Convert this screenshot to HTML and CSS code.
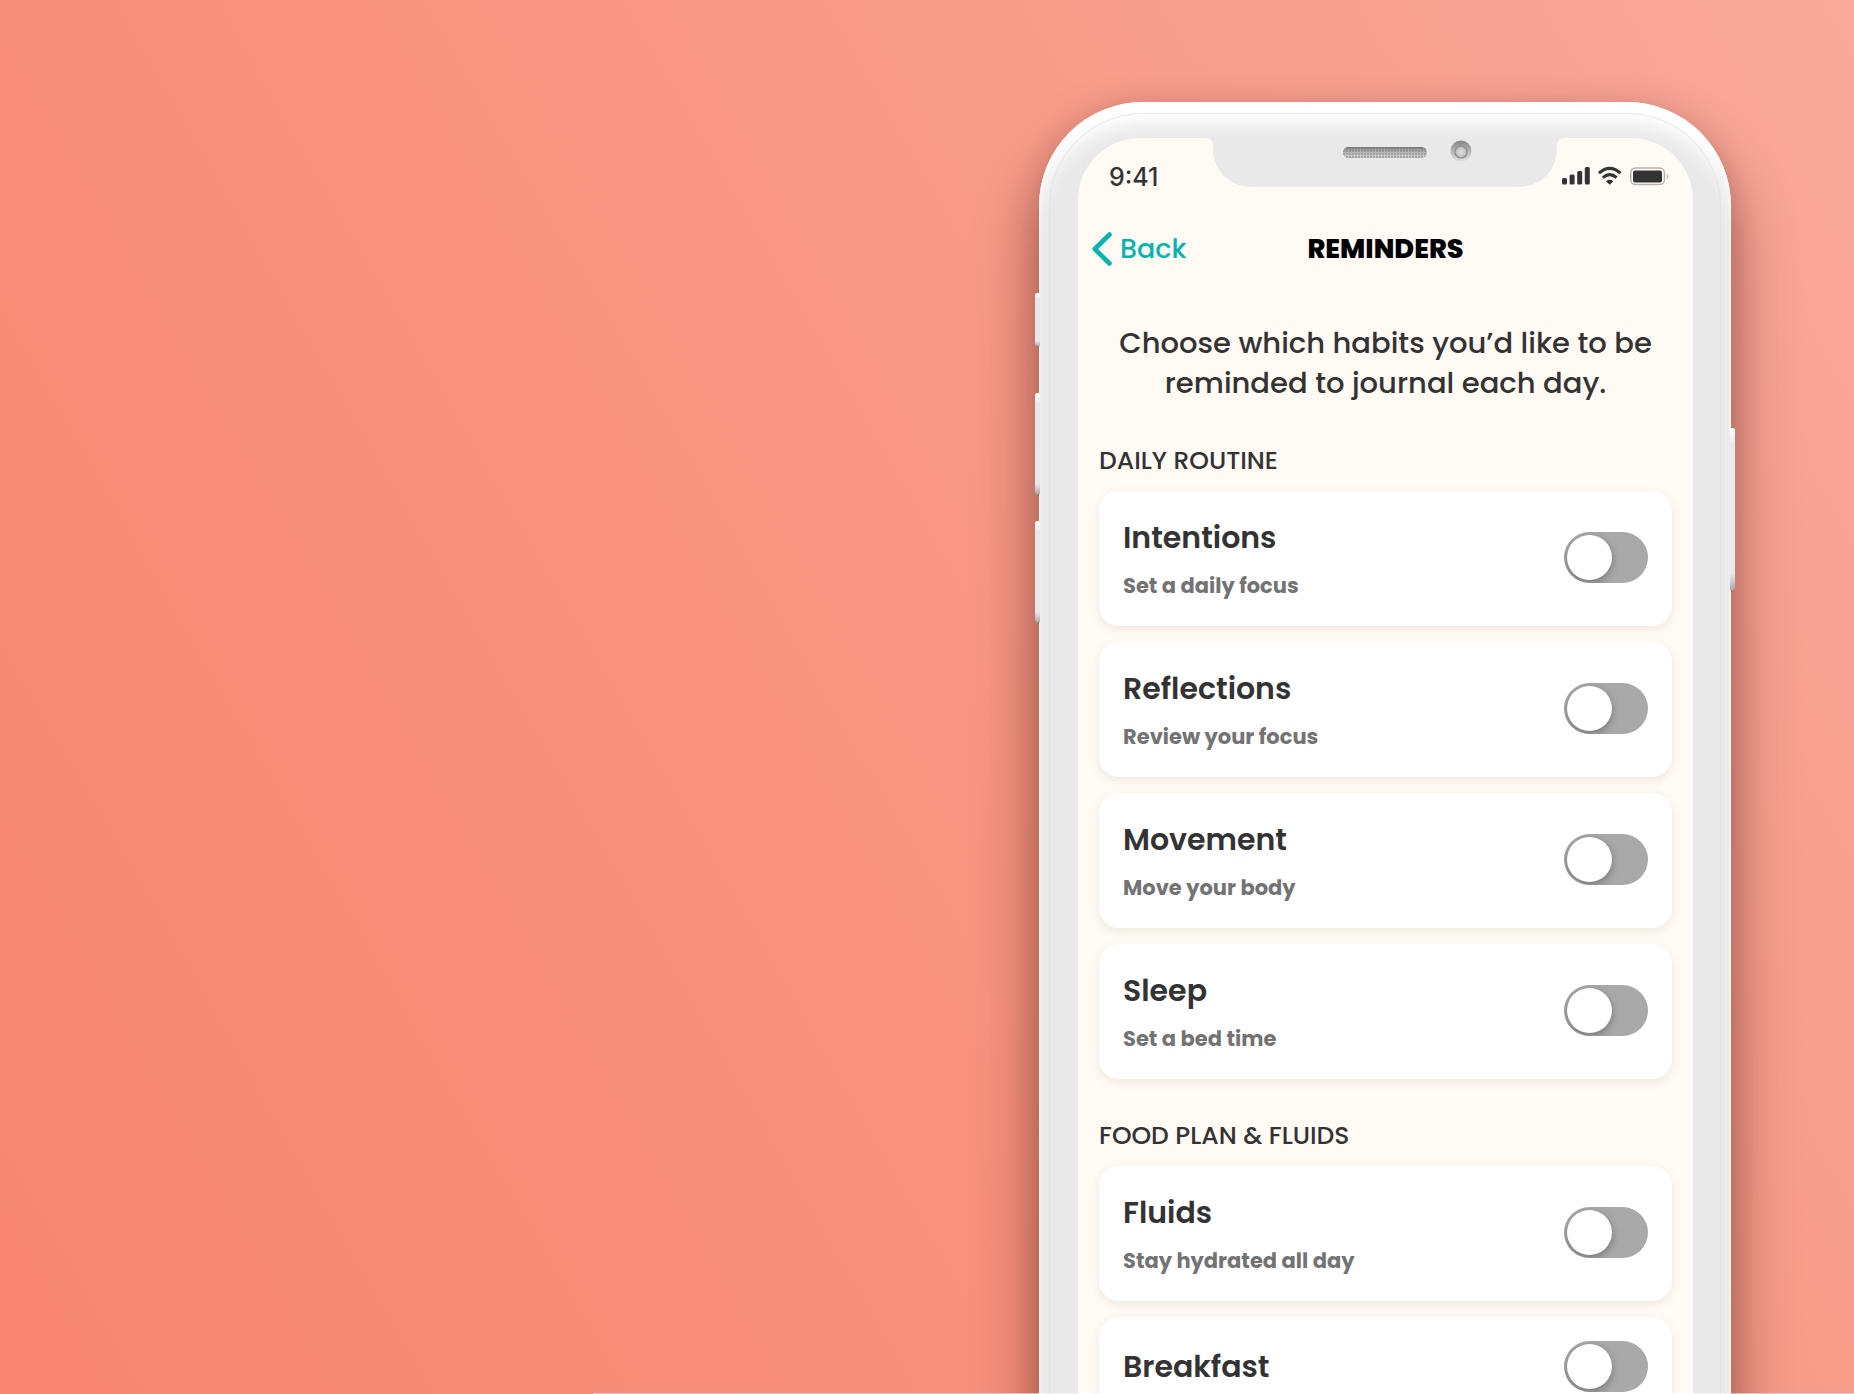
FILE: index.html
```
<!DOCTYPE html>
<html lang="en">
<head>
    <meta charset="UTF-8">
    <meta name="viewport" content="width=device-width, initial-scale=1.0">
    <title>Reminders</title>
    <link rel="stylesheet" href="styles.css">
</head>
<body>

    <main class="stage">
        <div class="phone">
            <!-- Side buttons -->
            <span class="side-button mute"></span>
            <span class="side-button volume-up"></span>
            <span class="side-button volume-down"></span>
            <span class="side-button power"></span>

            <div class="screen">
                <!-- Notch with speaker and camera -->
                <svg class="notch" viewBox="0 0 360 50" aria-hidden="true">
                    <defs>
                        <pattern id="mesh" width="3" height="3" patternUnits="userSpaceOnUse">
                            <rect width="3" height="3" fill="#c6c6c6"/>
                            <circle cx="1" cy="1" r="0.9" fill="#858585"/>
                        </pattern>
                        <linearGradient id="speaker-shade" x1="0" y1="0" x2="0" y2="1">
                            <stop offset="0" stop-color="#666" stop-opacity="0.8"/>
                            <stop offset="1" stop-color="#ddd" stop-opacity="0.1"/>
                        </linearGradient>
                        <linearGradient id="camera-ring" x1="0" y1="0" x2="0" y2="1">
                            <stop offset="0" stop-color="#858585"/>
                            <stop offset="1" stop-color="#e2e2e2"/>
                        </linearGradient>
                        <radialGradient id="lens">
                            <stop offset="0" stop-color="#e2e2e2"/>
                            <stop offset="1" stop-color="#b8b8b8"/>
                        </radialGradient>
                    </defs>
                    <path d="M0 0 C7 0 8 4 8 9 C8 34 25 49 48 49 H312 C335 49 352 34 352 9 C352 4 353 0 360 0 Z" fill="#e9e9e9"/>
                    <rect x="138" y="9" width="84" height="11" rx="5.5" fill="url(#mesh)"/>
                    <rect x="138" y="9" width="84" height="11" rx="5.5" fill="url(#speaker-shade)"/>
                    <circle cx="256" cy="13" r="10.5" fill="url(#camera-ring)"/>
                    <circle cx="256" cy="14" r="6" fill="url(#lens)" stroke="#8c8c8c" stroke-width="1.2"/>
                </svg>

                <div class="status-bar">
                    <time class="clock">9:41</time>
                    <svg class="status-icons" viewBox="0 0 108 20" aria-hidden="true">
                        <g fill="#333">
                            <rect x="0" y="11" width="5" height="6.5" rx="1.5"/>
                            <rect x="7.6" y="7.6" width="5" height="9.9" rx="1.5"/>
                            <rect x="15.2" y="4" width="5" height="13.5" rx="1.5"/>
                            <rect x="22.8" y="0" width="5" height="17.5" rx="1.5"/>
                            <rect x="71" y="3.5" width="29" height="12" rx="2"/>
                            <path d="M47.7 17.8 L44 14.2 Q47.7 11.4 51.4 14.2 Z"/>
                        </g>
                        <g fill="none" stroke="#333" stroke-width="3">
                            <path d="M36.9 6.1 Q47.7 -3.3 58.5 6.1"/>
                            <path d="M40.8 10.6 Q47.7 4.6 54.6 10.6"/>
                        </g>
                        <rect x="68.8" y="1" width="33.6" height="16.6" rx="4.5" fill="none" stroke="#b9b4ae" stroke-width="1.5"/>
                        <path d="M104.8 6.5 Q107.8 9.3 104.8 12.2 Z" fill="#b9b4ae"/>
                    </svg>
                </div>

                <header class="nav-bar">
                    <a class="back" href="#">
                        <svg class="chevron" viewBox="0 0 20 34" aria-hidden="true">
                            <path d="M17.5 2.5 L2.8 17 L17.5 31.5" fill="none" stroke="#06b3b0" stroke-width="4.6" stroke-linecap="round" stroke-linejoin="round"/>
                        </svg>
                        Back
                    </a>
                    <h1>REMINDERS</h1>
                </header>

                <p class="intro">Choose which habits you’d like to be<br>reminded to journal each day.</p>

                <section class="group">
                    <h2>DAILY ROUTINE</h2>
                    <label class="card">
                        <span class="text">
                            <span class="title">Intentions</span>
                            <span class="hint">Set a daily focus</span>
                        </span>
                        <input class="switch" type="checkbox" role="switch">
                    </label>
                    <label class="card">
                        <span class="text">
                            <span class="title">Reflections</span>
                            <span class="hint">Review your focus</span>
                        </span>
                        <input class="switch" type="checkbox" role="switch">
                    </label>
                    <label class="card">
                        <span class="text">
                            <span class="title">Movement</span>
                            <span class="hint">Move your body</span>
                        </span>
                        <input class="switch" type="checkbox" role="switch">
                    </label>
                    <label class="card">
                        <span class="text">
                            <span class="title">Sleep</span>
                            <span class="hint">Set a bed time</span>
                        </span>
                        <input class="switch" type="checkbox" role="switch">
                    </label>
                </section>

                <section class="group">
                    <h2>FOOD PLAN &amp; FLUIDS</h2>
                    <label class="card">
                        <span class="text">
                            <span class="title">Fluids</span>
                            <span class="hint">Stay hydrated all day</span>
                        </span>
                        <input class="switch" type="checkbox" role="switch">
                    </label>
                    <label class="card">
                        <span class="text">
                            <span class="title">Breakfast</span>
                        </span>
                        <input class="switch" type="checkbox" role="switch">
                    </label>
                </section>
            </div>
        </div>
    </main>

</body>
</html>
```
FILE: styles.css
```
* {
    box-sizing: border-box;
}

body, html {
    margin: 0;
    padding: 0;
    height: 100%;
    font-family: "Poppins", "Inter", sans-serif;
    color: #333;
}

.stage {
    position: relative;
    display: flex;
    justify-content: flex-end;
    align-items: flex-start;
    height: 100vh;
    padding: 102px 123px 0 20px;
    overflow: hidden;
    background: linear-gradient(60deg, #f78670 0%, #f8917d 40%, #f9a999 100%);
}

/* Thin light edge along the bottom */
.stage::after {
    content: "";
    position: absolute;
    right: 0;
    bottom: 0;
    width: 68%;
    height: 1px;
    background: rgba(255, 255, 255, 0.5);
}

/* Phone body */
.phone {
    position: relative;
    width: 100%;
    max-width: 692px;
    padding: 36px 38px 38px 39px;
    border-radius: 104px;
    background: #e9e9e9;
    box-shadow:
        0 40px 64px rgba(50, 10, 0, 0.45),
        0 4px 30px rgba(50, 10, 0, 0.14),
        inset 0 28px 18px -6px #fff,
        inset 0 0 3px #fff;
}

.phone::before {
    content: "";
    position: absolute;
    inset: 11px 10px;
    border: 1px solid #dedede;
    border-radius: 94px;
    opacity: 0.6;
}

.side-button {
    position: absolute;
    left: -4px;
    width: 5px;
    height: 101px;
    border-radius: 2px 0 0 2px;
    background: linear-gradient(#fff, #e8e8e8 10%, #e8e8e8 90%, #aaa);
}

.mute {
    top: 191px;
    height: 53px;
}

.volume-up {
    top: 291px;
}

.volume-down {
    top: 419px;
}

.power {
    top: 326px;
    left: auto;
    right: -4px;
    height: 162px;
    border-radius: 0 2px 2px 0;
}

/* Screen */
.screen {
    position: relative;
    padding: 0 21px 40px;
    border-radius: 62px;
    background: #fffaf4;
}

.notch {
    position: absolute;
    top: 0;
    left: calc(50% - 1px);
    width: 360px;
    height: 50px;
    transform: translateX(-50%);
}

.status-bar {
    display: flex;
    justify-content: space-between;
    align-items: center;
    height: 78px;
    padding: 0 2px 0 10px;
}

.clock {
    font-family: "Inter", sans-serif;
    font-size: 25px;
    font-weight: 500;
}

.status-icons {
    width: 108px;
    height: 20px;
    overflow: visible;
}

.nav-bar {
    display: grid;
    grid-template-columns: 1fr auto 1fr;
    align-items: center;
    height: 66px;
    margin-left: -7px;
    margin-right: -7px;
}

.back {
    display: flex;
    align-items: center;
    gap: 8px;
    color: #06b3b0;
    font-size: 27px;
    font-weight: 500;
    text-decoration: none;
}

.chevron {
    width: 20px;
    height: 34px;
}

.nav-bar h1 {
    margin: 0;
    color: #000;
    font-size: 27px;
    font-weight: 800;
}

.intro {
    margin: 41px 0 1px;
    font-size: 29px;
    font-weight: 500;
    line-height: 40px;
    text-align: center;
}

.group {
    display: flex;
    flex-direction: column;
    gap: 16px;
    padding-top: 42px;
}

.group h2 {
    margin: 0;
    font-size: 25px;
    font-weight: 500;
    line-height: 29px;
}

.card {
    display: flex;
    justify-content: space-between;
    align-items: center;
    padding: 24px 24px 26px;
    border-radius: 20px;
    background: #fff;
    box-shadow: 0 3px 10px rgba(110, 80, 40, 0.1);
}

.text {
    display: flex;
    flex-direction: column;
    gap: 11px;
}

.title {
    font-size: 30px;
    font-weight: 600;
    line-height: 46px;
}

.hint {
    color: #737373;
    font-size: 21px;
    font-weight: 700;
    line-height: 28px;
}

/* Toggle */
.switch {
    display: flex;
    align-items: center;
    appearance: none;
    width: 84px;
    height: 51px;
    margin: 0;
    padding: 3px;
    overflow: hidden;
    border-radius: 26px;
    background: #a9a9a9;
    cursor: pointer;
}

.switch::before {
    content: "";
    width: 45px;
    height: 45px;
    border-radius: 50%;
    background: #fff;
    box-shadow: 0 3px 8px rgba(0, 0, 0, 0.3);
    transition: margin 0.2s;
}

.switch:checked {
    background: #06b3b0;
}

.switch:checked::before {
    margin-left: 33px;
}

@media (max-width: 760px) {
    .stage {
        padding: 40px 12px 0;
    }
}
```
